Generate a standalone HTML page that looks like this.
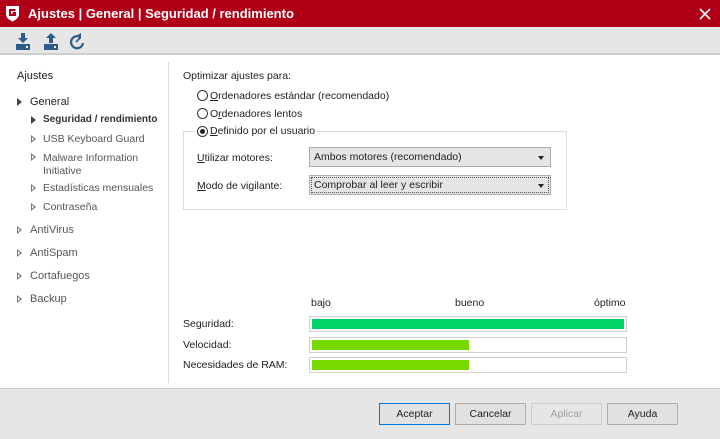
<!DOCTYPE html>
<html><head><meta charset="utf-8"><style>
*{margin:0;padding:0;box-sizing:border-box}
body{width:720px;height:439px;overflow:hidden;background:#fff;font-family:"Liberation Sans",sans-serif;font-size:10.5px;color:#222;position:relative}
.a{position:absolute;white-space:nowrap}
.tb{left:0;top:0;width:720px;height:27px;background:#b00018}
.tool{left:0;top:27px;width:720px;height:28px;background:#e6e6e6;border-bottom:2px solid #cfcfcf}
.foot{left:0;top:388px;width:720px;height:51px;background:#e6e6e6;border-top:1px solid #c8c8c8}
.tri{width:0;height:0;border-top:4px solid transparent;border-bottom:4px solid transparent;border-left:5px solid #444}
.trio{width:0;height:0;border-top:4px solid transparent;border-bottom:4px solid transparent;border-left:5px solid #777}
.trio:after{content:"";position:absolute;left:-4px;top:-2px;border-top:2px solid transparent;border-bottom:2px solid transparent;border-left:2px solid #fff}
.s{color:#555}
.rad{width:11px;height:11px;border:1px solid #333;border-radius:50%;background:#fff}
.combo{height:20px;width:242px;border:1px solid #adadad;background:#e5e5e5;padding:3px 4px}
.combo:after{content:"";position:absolute;right:6px;top:8px;border-left:3.5px solid transparent;border-right:3.5px solid transparent;border-top:4px solid #222}
.bar{left:309px;width:318px;height:16px;border:1px solid #d0d0d0;background:#fff}
.bar div{position:absolute;left:2px;top:2px;height:10px}
.btn{top:403px;height:22px;width:71px;border:1px solid #adadad;background:#e1e1e1;text-align:center;line-height:20px}
u{text-decoration:underline}
</style></head><body>
<div class="a tb"></div>
<svg class="a" style="left:5px;top:5px" width="15" height="17" viewBox="0 0 15 17"><path d="M1 1h13v8c0 4-3.5 6-6.5 7.5C4.5 15 1 13 1 9z" fill="#fff"/><path d="M10.5 5H5v5h5V8H7.5" stroke="#b00018" stroke-width="2" fill="none"/></svg>
<div class="a" style="left:28px;top:6px;color:#fff;font-weight:bold;font-size:13px">Ajustes | General | Seguridad / rendimiento</div>
<svg class="a" style="left:699px;top:8px" width="12" height="12"><path d="M1 1L11 11M11 1L1 11" stroke="#fff" stroke-width="1.6"/></svg>
<div class="a tool"></div>
<svg class="a" style="left:16px;top:32px" width="70" height="20"><g fill="#2c5d8a"><path d="M5 1h4v5h3l-5 5-5-5h3z"/><rect x="0" y="12" width="14" height="6"/><path d="M33 11V6h-3l5-5 5 5h-3v5z"/><rect x="28" y="12" width="14" height="6"/></g><rect x="10" y="14" width="2" height="2" fill="#fff"/><rect x="38" y="14" width="2" height="2" fill="#fff"/><path d="M64 5a6 6 0 1 0 3 6" stroke="#2c5d8a" stroke-width="2.2" fill="none"/><path d="M60 4l5-3v6z" fill="#2c5d8a"/><path d="M60 10l4-4" stroke="#2c5d8a" stroke-width="1.8"/></svg>
<div class="a" style="left:17px;top:70px;font-size:11px">Ajustes</div>
<div class="a tri" style="left:17px;top:98px"></div><div class="a" style="left:30px;top:96px;font-size:11px">General</div>
<div class="a tri" style="left:31px;top:116px"></div><div class="a" style="left:43px;top:114px;font-weight:bold;color:#333;font-size:10px">Seguridad / rendimiento</div>
<div class="a trio" style="left:31px;top:135px"></div><div class="a s" style="left:43px;top:133px">USB Keyboard Guard</div>
<div class="a trio" style="left:31px;top:153px"></div><div class="a s" style="left:43px;top:152px;line-height:13px">Malware Information<br>Initiative</div>
<div class="a trio" style="left:31px;top:184px"></div><div class="a s" style="left:43px;top:182px">Estadísticas mensuales</div>
<div class="a trio" style="left:31px;top:203px"></div><div class="a s" style="left:43px;top:201px">Contraseña</div>
<div class="a trio" style="left:17px;top:226px"></div><div class="a s" style="left:30px;top:224px;font-size:11px">AntiVirus</div>
<div class="a trio" style="left:17px;top:249px"></div><div class="a s" style="left:30px;top:247px;font-size:11px">AntiSpam</div>
<div class="a trio" style="left:17px;top:272px"></div><div class="a s" style="left:30px;top:270px;font-size:11px">Cortafuegos</div>
<div class="a trio" style="left:17px;top:295px"></div><div class="a s" style="left:30px;top:293px;font-size:11px">Backup</div>
<div class="a" style="left:168px;top:62px;width:1px;height:321px;background:#dcdcdc"></div>
<div class="a" style="left:183px;top:70px">Optimizar ajustes para:</div>
<div class="a rad" style="left:197px;top:90px"></div><div class="a" style="left:210px;top:90px"><u>O</u>rdenadores estándar (recomendado)</div>
<div class="a rad" style="left:197px;top:108px"></div><div class="a" style="left:210px;top:108px">O<u>r</u>denadores lentos</div>
<div class="a" style="left:183px;top:131px;width:384px;height:79px;border:1px solid #dcdcdc"></div>
<div class="a" style="left:195px;top:124px;width:122px;height:14px;background:#fff"></div>
<div class="a rad" style="left:197px;top:126px"></div><div class="a" style="left:200px;top:129px;width:5px;height:5px;border-radius:50%;background:#222"></div>
<div class="a" style="left:210px;top:125px"><u>D</u>efinido por el usuario</div>
<div class="a" style="left:197px;top:152px"><u>U</u>tilizar motores:</div>
<div class="a combo" style="left:309px;top:147px">Ambos motores (recomendado)</div>
<div class="a" style="left:197px;top:180px"><u>M</u>odo de vigilante:</div>
<div class="a combo" style="left:309px;top:175px;outline:1px dotted #555;outline-offset:-3px">Comprobar al leer y escribir</div>
<div class="a" style="left:311px;top:297px">bajo</div>
<div class="a" style="left:455px;top:297px">bueno</div>
<div class="a" style="left:594px;top:297px">óptimo</div>
<div class="a" style="left:183px;top:318px">Seguridad:</div>
<div class="a bar" style="top:316px"><div style="width:312px;background:#00d368"></div></div>
<div class="a" style="left:183px;top:339px">Velocidad:</div>
<div class="a bar" style="top:337px"><div style="width:157px;background:#77d900"></div></div>
<div class="a" style="left:183px;top:359px">Necesidades de RAM:</div>
<div class="a bar" style="top:357px"><div style="width:157px;background:#77d900"></div></div>
<div class="a foot"></div>
<div class="a btn" style="left:379px;border-color:#0078d7">Aceptar</div>
<div class="a btn" style="left:455px">Cancelar</div>
<div class="a btn" style="left:531px;color:#a0a0a0;border-color:#ccc;background:#e6e6e6">Aplicar</div>
<div class="a btn" style="left:607px">Ayuda</div>
</body></html>
